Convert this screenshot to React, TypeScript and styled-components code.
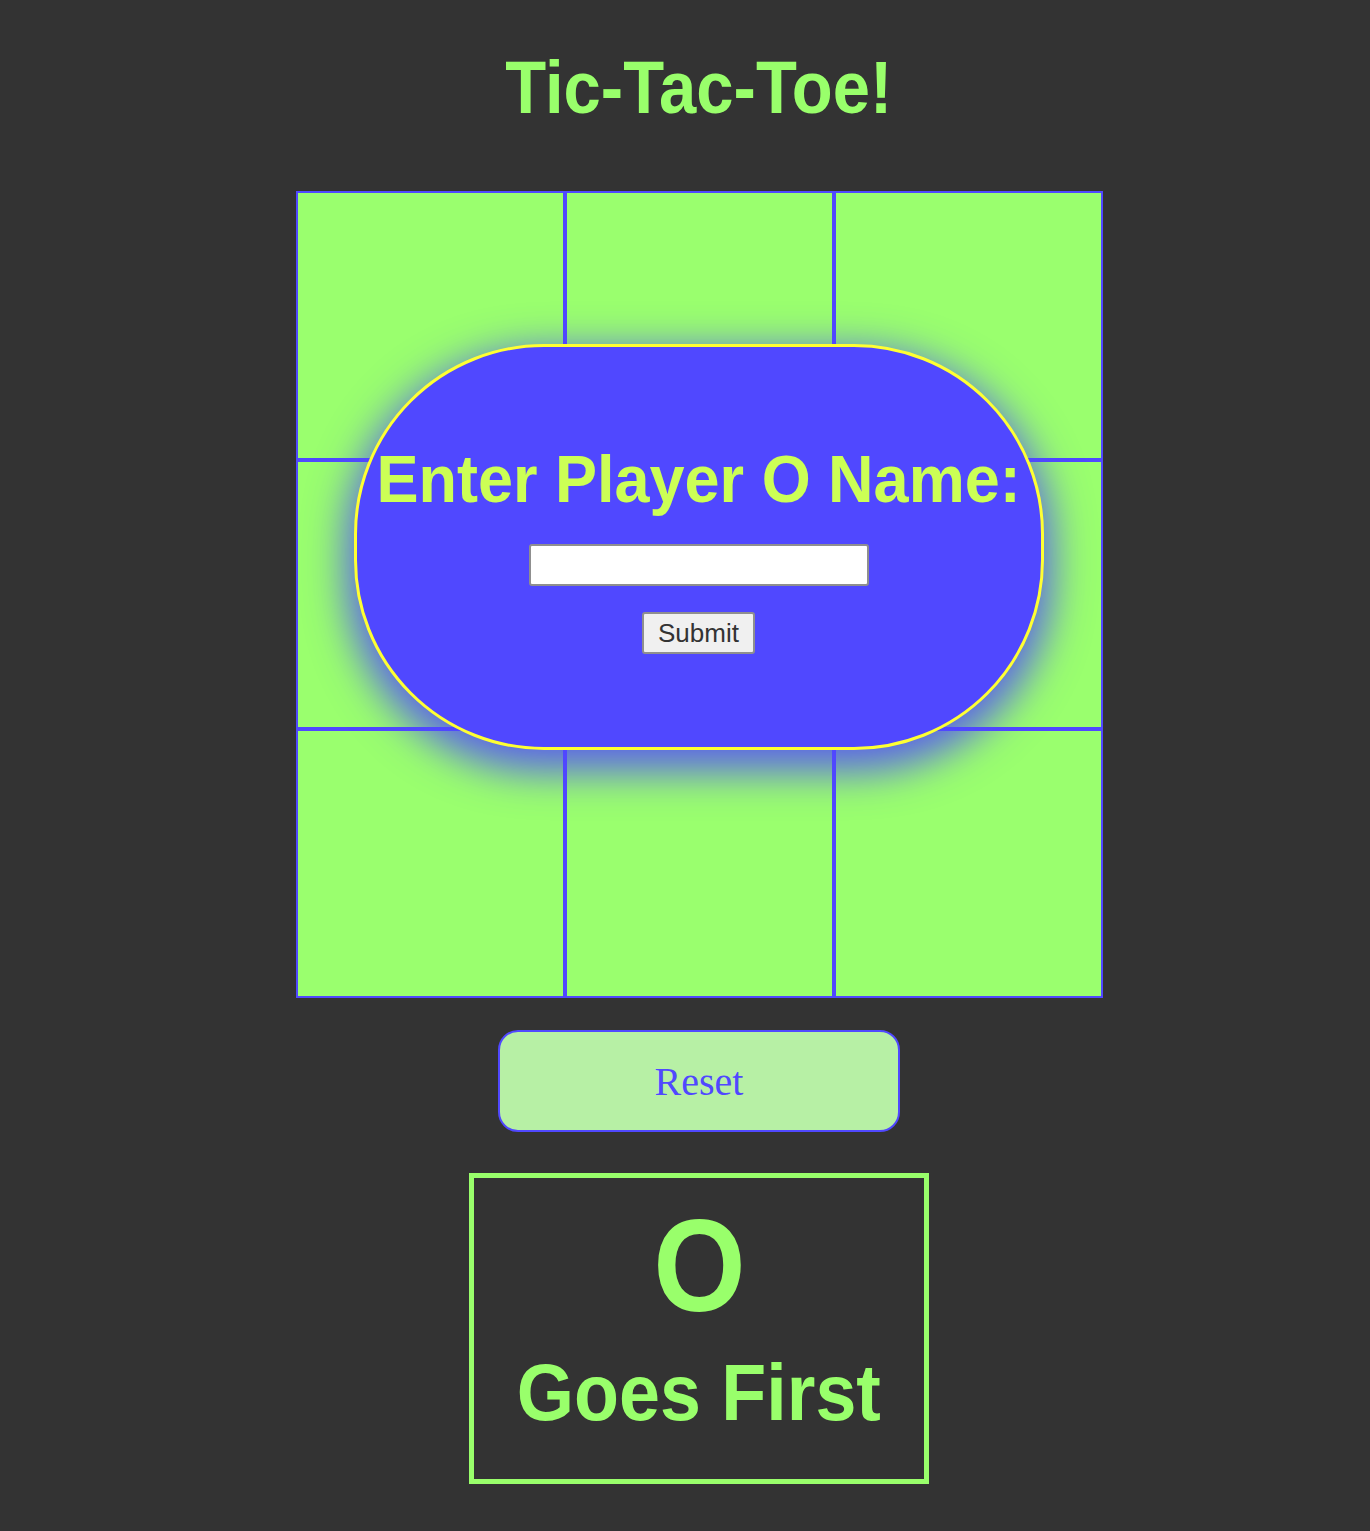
import React from "react";
import styled, { createGlobalStyle } from "styled-components";

const GlobalStyle = createGlobalStyle`
  html, body { margin: 0; padding: 0; background: #333333; }
  body { font-family: "Liberation Sans", Arial, sans-serif; }
`;

const GOTHIC = `"Liberation Sans", Arial, sans-serif`;

const Page = styled.div`
  min-height: 100vh;
  background: #333333;
  display: flex;
  flex-direction: column;
  align-items: center;
  padding: 0 0 46px 28px;
  box-sizing: border-box;
`;

const Title = styled.h1`
  margin: 48px 0 0;
  font-family: ${GOTHIC};
  font-weight: 700;
  font-size: 74px;
  line-height: 80px;
  color: #99ff6b;
  transform: scaleX(0.905);
  white-space: nowrap;
`;

const BoardWrap = styled.div`
  position: relative;
  margin-top: 63px;
  width: 807px;
`;

const Board = styled.div`
  display: grid;
  grid-template-columns: repeat(3, 269px);
  grid-template-rows: repeat(3, 269px);
`;

const Cell = styled.div`
  box-sizing: border-box;
  background: #9aff6e;
  border: 2px solid #5048ff;
`;

const Modal = styled.div`
  position: absolute;
  top: 153px;
  left: 58px;
  width: 690px;
  height: 406px;
  box-sizing: border-box;
  background: #5048ff;
  border: 3px solid #ffff33;
  border-radius: 190px;
  box-shadow: 0 14px 40px 8px rgba(80, 72, 255, 0.85);
  display: flex;
  flex-direction: column;
  align-items: center;
  padding-top: 96px;
`;

const ModalHeading = styled.h2`
  margin: 0;
  font-family: ${GOTHIC};
  font-weight: 700;
  font-size: 67px;
  line-height: 72px;
  color: #ccff55;
  white-space: nowrap;
  transform: scaleX(0.94);
`;

const NameInput = styled.input`
  margin-top: 29px;
  width: 340px;
  height: 42px;
  box-sizing: border-box;
  border: 2px solid #8f8f8f;
  border-radius: 3px;
  background: #ffffff;
  font-size: 20px;
`;

const SubmitButton = styled.button`
  margin-top: 26px;
  width: 113px;
  height: 42px;
  box-sizing: border-box;
  border: 2px solid #8f8f8f;
  border-radius: 3px;
  background: #f0f0f0;
  color: #333333;
  font-family: "Liberation Sans", Arial, sans-serif;
  font-size: 26px;
  padding: 0;
`;

const ResetButton = styled.button`
  margin-top: 32px;
  width: 402px;
  height: 102px;
  box-sizing: border-box;
  background: #b7f0a5;
  border: 2px solid #5048ff;
  border-radius: 20px;
  color: #5048ff;
  font-family: "Liberation Serif", "Times New Roman", serif;
  font-size: 40px;
  padding: 0;
`;

const StatusBox = styled.div`
  margin-top: 41px;
  width: 460px;
  height: 311px;
  box-sizing: border-box;
  border: 5px solid #99ff6b;
  display: flex;
  flex-direction: column;
  align-items: center;
  color: #99ff6b;
`;

const Mark = styled.div`
  margin-top: 22px;
  font-family: "Liberation Sans", Arial, sans-serif;
  font-weight: 700;
  font-size: 132px;
  line-height: 132px;
  transform: scaleX(0.9);
`;

const StatusText = styled.div`
  margin-top: 16px;
  font-family: ${GOTHIC};
  font-weight: 700;
  font-size: 80px;
  line-height: 90px;
  white-space: nowrap;
  transform: scaleX(0.92);
`;

export default function App() {
  const cells = Array.from({ length: 9 });
  return (
    <>
      <GlobalStyle />
      <Page>
        <Title>Tic-Tac-Toe!</Title>
        <BoardWrap>
          <Board>
            {cells.map((_, i) => (
              <Cell key={i} />
            ))}
          </Board>
          <Modal>
            <ModalHeading>Enter Player O Name:</ModalHeading>
            <NameInput type="text" />
            <SubmitButton>Submit</SubmitButton>
          </Modal>
        </BoardWrap>
        <ResetButton>Reset</ResetButton>
        <StatusBox>
          <Mark>O</Mark>
          <StatusText>Goes First</StatusText>
        </StatusBox>
      </Page>
    </>
  );
}
